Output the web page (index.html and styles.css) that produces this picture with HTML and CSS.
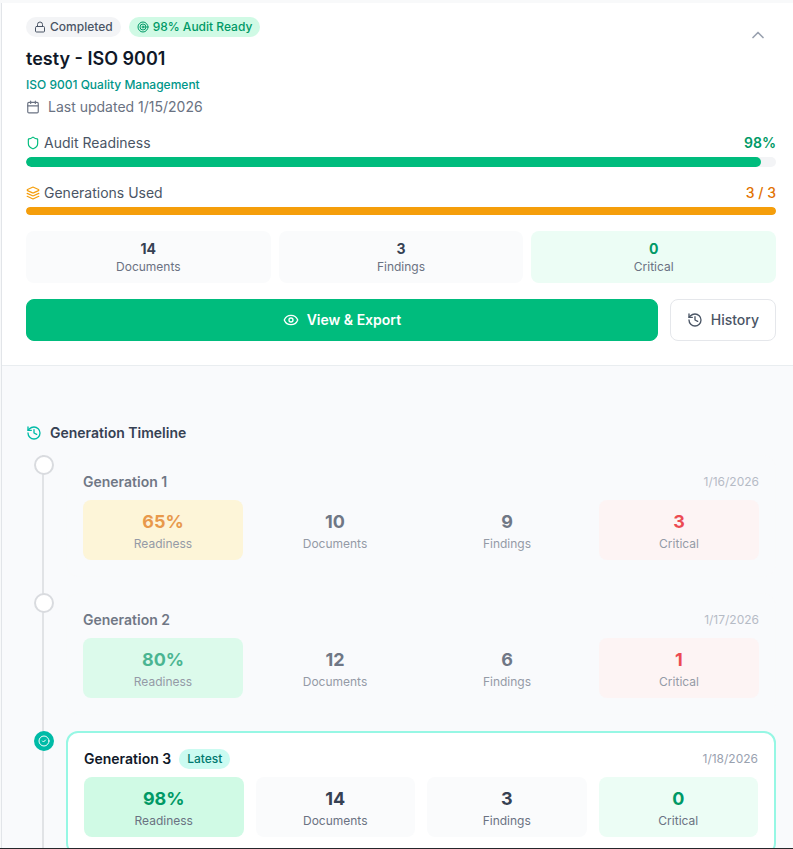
FILE: index.html
```html
<!DOCTYPE html>
<html lang="en">
<head>
<meta charset="utf-8">
<meta name="viewport" content="width=device-width, initial-scale=1">
<title>testy - ISO 9001</title>
<link rel="stylesheet" href="styles.css">
</head>
<body>
<svg class="defs" aria-hidden="true">
  <symbol id="history" viewBox="0 0 24 24"><path d="M3 12a9 9 0 1 0 9-9 9.75 9.75 0 0 0-6.74 2.74L3 8"/><path d="M3 3v5h5"/><path d="M12 7v5l4 2"/></symbol>
</svg>
<main class="card">
  <section class="summary">
    <header class="summary-head">
      <div>
        <div class="badges">
          <span class="badge badge-gray"><svg class="icon icon-xs" viewBox="0 0 24 24"><rect x="3" y="11" width="18" height="11" rx="2"/><path d="M7 11V7a5 5 0 0 1 10 0v4"/></svg>Completed</span>
          <span class="badge badge-green"><svg class="icon icon-xs" viewBox="0 0 24 24"><circle cx="12" cy="12" r="10"/><circle cx="12" cy="12" r="6"/><circle cx="12" cy="12" r="2"/></svg>98% Audit Ready</span>
        </div>
        <h1>testy - ISO 9001</h1>
        <p class="standard">ISO 9001 Quality Management</p>
        <p class="updated"><svg class="icon icon-sm" viewBox="0 0 24 24"><path d="M8 2v4M16 2v4"/><rect x="3" y="4" width="18" height="18" rx="2"/><path d="M3 10h18"/></svg>Last updated 1/15/2026</p>
      </div>
      <button class="collapse" type="button" aria-label="Collapse"><svg class="icon icon-lg" viewBox="0 0 24 24"><path d="m18 15-6-6-6 6"/></svg></button>
    </header>

    <div class="meter meter-green">
      <div class="meter-row"><span class="meter-label"><svg class="icon icon-sm" viewBox="0 0 24 24"><path d="M20 13c0 5-3.5 7.500-7.660 8.950a1 1 0 0 1-.67-.01C7.500 20.500 4 18 4 13V6a1 1 0 0 1 1-1c2 0 4.500-1.200 6.240-2.720a1.170 1.170 0 0 1 1.520 0C14.510 3.810 17 5 19 5a1 1 0 0 1 1 1z"/></svg>Audit Readiness</span><strong>98%</strong></div>
      <div class="track"><div class="fill" style="width:98%"></div></div>
    </div>
    <div class="meter meter-amber">
      <div class="meter-row"><span class="meter-label"><svg class="icon icon-sm" viewBox="0 0 24 24"><path d="m12.830 2.180a2 2 0 0 0-1.660 0L2.600 6.080a1 1 0 0 0 0 1.830l8.580 3.910a2 2 0 0 0 1.660 0l8.580-3.900a1 1 0 0 0 0-1.830z"/><path d="m22 17.650-9.170 4.160a2 2 0 0 1-1.660 0L2 17.650"/><path d="m22 12.650-9.170 4.160a2 2 0 0 1-1.660 0L2 12.650"/></svg>Generations Used</span><strong>3 / 3</strong></div>
      <div class="track"><div class="fill" style="width:100%"></div></div>
    </div>

    <dl class="stats">
      <div class="stat"><dd>14</dd><dt>Documents</dt></div>
      <div class="stat"><dd>3</dd><dt>Findings</dt></div>
      <div class="stat mint"><dd>0</dd><dt>Critical</dt></div>
    </dl>

    <div class="actions">
      <button class="btn btn-primary" type="button"><svg class="icon icon-md" viewBox="0 0 24 24"><path d="M2.060 12.350a1 1 0 0 1 0-.7 10.750 10.750 0 0 1 19.880 0 1 1 0 0 1 0 .7 10.750 10.750 0 0 1-19.880 0"/><circle cx="12" cy="12" r="3"/></svg>View &amp; Export</button>
      <button class="btn btn-outline" type="button"><svg class="icon icon-md"><use href="#history"/></svg>History</button>
    </div>
  </section>

  <section class="timeline">
    <h2><svg class="icon icon-md"><use href="#history"/></svg>Generation Timeline</h2>
    <ol>
      <li class="past">
        <span class="node"></span>
        <article>
          <header><h3>Generation 1</h3><time datetime="2026-01-16">1/16/2026</time></header>
          <dl class="stats stats-lg">
            <div class="stat amber"><dd>65%</dd><dt>Readiness</dt></div>
            <div class="stat"><dd>10</dd><dt>Documents</dt></div>
            <div class="stat"><dd>9</dd><dt>Findings</dt></div>
            <div class="stat red"><dd>3</dd><dt>Critical</dt></div>
          </dl>
        </article>
      </li>
      <li class="past">
        <span class="node"></span>
        <article>
          <header><h3>Generation 2</h3><time datetime="2026-01-17">1/17/2026</time></header>
          <dl class="stats stats-lg">
            <div class="stat green"><dd>80%</dd><dt>Readiness</dt></div>
            <div class="stat"><dd>12</dd><dt>Documents</dt></div>
            <div class="stat"><dd>6</dd><dt>Findings</dt></div>
            <div class="stat red"><dd>1</dd><dt>Critical</dt></div>
          </dl>
        </article>
      </li>
      <li class="latest">
        <span class="node"><svg class="icon icon-xs" viewBox="0 0 24 24"><circle cx="12" cy="12" r="10"/><path d="m9 12 2 2 4-4"/></svg></span>
        <article>
          <header><h3>Generation 3</h3><span class="tag">Latest</span><time datetime="2026-01-18">1/18/2026</time></header>
          <dl class="stats stats-lg">
            <div class="stat green"><dd>98%</dd><dt>Readiness</dt></div>
            <div class="stat"><dd>14</dd><dt>Documents</dt></div>
            <div class="stat"><dd>3</dd><dt>Findings</dt></div>
            <div class="stat mint"><dd>0</dd><dt>Critical</dt></div>
          </dl>
        </article>
      </li>
    </ol>
  </section>
</main>
</body>
</html>
```
FILE: styles.css
```css
* { box-sizing: border-box; margin: 0; padding: 0; }

body {
  height: 100vh;
  overflow: hidden;
  padding: 3px 0 0 1px;
  border-bottom: 1px solid #25272b;
  background: #f8f9fa;
  color: #4a5565;
  font: 14px/20px Inter, "Liberation Sans", sans-serif;
}

button { font: inherit; cursor: pointer; }
ol { list-style: none; }
.defs { display: none; }

.icon {
  flex: none;
  fill: none;
  stroke: currentColor;
  stroke-width: 2;
  stroke-linecap: round;
  stroke-linejoin: round;
}
.icon-xs { width: 12px; height: 12px; }
.icon-sm { width: 14px; height: 14px; }
.icon-md { width: 16px; height: 16px; }
.icon-lg { width: 20px; height: 20px; }

.card { border-left: 1px solid #e2e5e9; background: #fff; }
.summary { padding: 14px 17px 24px 24px; }
.summary-head { display: flex; justify-content: space-between; align-items: flex-start; }
.badges { display: flex; gap: 8px; }
.badge {
  display: inline-flex;
  align-items: center;
  gap: 4px;
  height: 20px;
  padding: 0 8px;
  border-radius: 10px;
  font-size: 12px;
  font-weight: 500;
}
.badge-gray { background: #f3f4f6; }
.badge-green { background: #d0fae5; color: #009966; }

h1 { margin-top: 8px; font-size: 18px; line-height: 28px; font-weight: 600; color: #101828; }
.standard { margin-top: 4px; font-size: 12px; line-height: 16px; font-weight: 500; color: #009689; }
.updated { display: flex; align-items: center; gap: 8px; margin-top: 4px; color: #6a7282; }
.collapse { display: flex; padding: 8px; border: 0; background: none; color: #99a1af; }

.meter { margin-top: 16px; }
.meter-row { display: flex; justify-content: space-between; margin-bottom: 4px; }
.meter-label { display: flex; align-items: center; gap: 4px; }
.meter strong { font-weight: 600; }
.track { height: 10px; border-radius: 5px; background: #f3f4f6; overflow: hidden; }
.fill { height: 100%; border-radius: 5px; }
.meter-green .icon { color: #00bc7d; }
.meter-green strong { color: #009966; }
.meter-green .fill { background: #00bc7d; }
.meter-amber .icon { color: #f59e0b; }
.meter-amber strong { color: #e17100; font-weight: 500; }
.meter-amber .track { height: 8px; }
.meter-amber .fill { background: #f59e0b; }

.stats { display: grid; grid-template-columns: repeat(3, 1fr); gap: 8px; margin-top: 16px; text-align: center; }
.stat { display: flex; flex-direction: column; padding: 8px; border-radius: 8px; background: #fafbfc; }
.stat dd { font-weight: 700; color: #364153; }
.stat dt { font-size: 12px; line-height: 16px; color: #6a7282; }
.mint { background: #ecfdf5; }
.green { background: #d0fae5; }
.amber { background: #fff3c9; }
.red { background: #fff2f2; }
.mint dd, .green dd { color: #009966; }
.amber dd { color: #e17100; }
.red dd { color: #e7000b; }

.actions { display: flex; gap: 12px; margin-top: 16px; }
.btn {
  display: flex;
  align-items: center;
  justify-content: center;
  gap: 8px;
  height: 42px;
  padding: 0 16px;
  border: 1px solid #e5e7eb;
  border-radius: 8px;
  font-weight: 500;
}
.btn-primary { flex: 1; border-color: #00bc7d; background: #00bc7d; color: #fff; font-weight: 600; }
.btn-outline { background: #fff; color: #4a5565; }

.timeline { padding: 57px 17px 24px 24px; border-top: 1px solid #e9edf0; background: #f9fafc; }
h2 { display: flex; align-items: center; gap: 8px; margin-bottom: 12px; font-size: 14px; font-weight: 600; color: #364153; }
h2 .icon { color: #00bba7; }

.timeline li { position: relative; display: flex; gap: 12px; padding: 0 0 16px 8px; }
.timeline li::before {
  content: "";
  position: absolute;
  top: 0;
  bottom: 0;
  left: 16px;
  width: 2px;
  background: #e1e3e6;
}
.node {
  position: relative;
  display: flex;
  flex: none;
  align-items: center;
  justify-content: center;
  width: 20px;
  height: 20px;
  border: 2px solid #d9dbdf;
  border-radius: 50%;
  background: #fff;
}
.latest .node { border-color: #00bba7; background: #00bba7; color: #fff; }
article { flex: 1; padding: 16px; border: 1px solid #f9fafb; border-radius: 12px; }
.past article { opacity: .7; }
.past .stat:not(.amber, .green, .red) { background: none; }
.latest article { border: 2px solid #96f7e4; background: #fff; }
article header { display: flex; align-items: center; gap: 8px; }
h3 { font-size: 14px; font-weight: 600; color: #364153; }
.latest h3 { color: #101828; }
.tag { padding: 0 8px; border-radius: 10px; background: #cbfbf1; color: #00786f; font-size: 12px; font-weight: 500; }
time { margin-left: auto; font-size: 12px; color: #99a1af; }
.stats-lg { grid-template-columns: repeat(4, 1fr); gap: 12px; margin-top: 8px; }
.stats-lg dd { font-size: 18px; line-height: 28px; }
```
